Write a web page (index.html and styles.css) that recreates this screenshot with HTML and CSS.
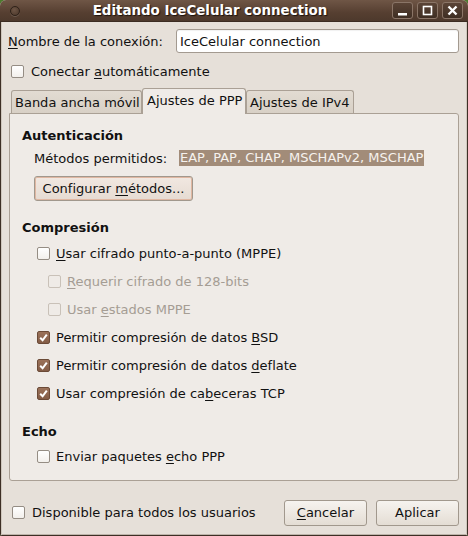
FILE: index.html
```html
<!DOCTYPE html>
<html lang="es">
<head>
<meta charset="utf-8">
<title>Editando IceCelular connection</title>
<link rel="stylesheet" href="styles.css">
</head>
<body>
<div class="window">
  <div class="titlebar">
    <span class="menu-dot"></span>
    <span class="title">Editando IceCelular connection</span>
    <div class="wbtns">
      <span class="wbtn"><svg width="11" height="11" viewBox="0 0 11 11"><rect x="1" y="8" width="9" height="2.5" fill="#fff"/></svg></span>
      <span class="wbtn"><svg width="11" height="11" viewBox="0 0 11 11"><rect x="1.5" y="1.5" width="8" height="8" fill="none" stroke="#fff" stroke-width="1.6"/></svg></span>
      <span class="wbtn"><svg width="11" height="11" viewBox="0 0 11 11"><path d="M1.5 1.5 L9.5 9.5 M9.5 1.5 L1.5 9.5" stroke="#fff" stroke-width="2.4"/></svg></span>
    </div>
  </div>
  <div class="content">
    <div class="name-row">
      <span class="name-label"><u>N</u>ombre de la conexión:</span>
      <div class="entry">IceCelular connection</div>
    </div>
    <div class="check top-check"><span class="box"></span><span>Conectar <u>a</u>utomáticamente</span></div>
    <div class="notebook">
      <div class="tabs">
        <div class="tab tab-1">Banda ancha móvil</div>
        <div class="tab tab-2 active">Ajustes de PPP</div>
        <div class="tab tab-3">Ajustes de IPv4</div>
      </div>
      <div class="panel">
        <div class="heading first">Autenticación</div>
        <div class="methods-row">
          <span class="methods-label">Métodos permitidos:</span>
          <span class="selected">EAP, PAP, CHAP, MSCHAPv2, MSCHAP</span>
        </div>
        <div class="btn config-btn"><span>Configurar <u>m</u>étodos...</span></div>
        <div class="heading comp">Compresión</div>
        <div class="check row"><span class="box"></span><span><u>U</u>sar cifrado punto-a-punto (MPPE)</span></div>
        <div class="check row sub disabled"><span class="box"></span><span><u>R</u>equerir cifrado de 128-bits</span></div>
        <div class="check row sub disabled"><span class="box"></span><span>Usar <u>e</u>stados MPPE</span></div>
        <div class="check row"><span class="box checked"><svg width="11" height="11" viewBox="0 0 11 11"><path d="M2.2 5.8 L4.6 8.3 L8.8 2.6" fill="none" stroke="#fff" stroke-width="2"/></svg></span><span>Permitir compresión de datos <u>B</u>SD</span></div>
        <div class="check row"><span class="box checked"><svg width="11" height="11" viewBox="0 0 11 11"><path d="M2.2 5.8 L4.6 8.3 L8.8 2.6" fill="none" stroke="#fff" stroke-width="2"/></svg></span><span>Permitir compresión de datos <u>d</u>eflate</span></div>
        <div class="check row"><span class="box checked"><svg width="11" height="11" viewBox="0 0 11 11"><path d="M2.2 5.8 L4.6 8.3 L8.8 2.6" fill="none" stroke="#fff" stroke-width="2"/></svg></span><span>Usar compresión de ca<u>b</u>eceras TCP</span></div>
        <div class="heading echo">Echo</div>
        <div class="check row"><span class="box"></span><span>Enviar paquetes <u>e</u>cho PPP</span></div>
      </div>
    </div>
    <div class="bottom">
      <div class="check bottom-check"><span class="box"></span><span>Disponible para todos los usuarios</span></div>
      <div class="btn action"><span><u>C</u>ancelar</span></div>
      <div class="btn action"><span>Aplicar</span></div>
    </div>
  </div>
</div>
</body>
</html>
```
FILE: styles.css
```css
html, body {
  margin: 0;
  padding: 0;
  background: #4d7a2e;
}
body {
  font-family: "DejaVu Sans", "Liberation Sans", sans-serif;
  font-size: 13px;
  color: #111;
}
u { text-decoration: underline; text-underline-offset: 2px; }

.window {
  width: 468px;
  height: 536px;
  display: flex;
  flex-direction: column;
  border-radius: 6px 6px 2px 2px;
  overflow: hidden;
  background: #e6e0d9;
}

.titlebar {
  height: 22px;
  flex: 0 0 22px;
  display: flex;
  align-items: center;
  padding: 0 5px 0 10px;
  background: linear-gradient(#6f5646, #563f31 60%, #4d392c);
  border-bottom: 1px solid #3c2c22;
  box-sizing: border-box;
}
.menu-dot {
  width: 8px;
  height: 8px;
  border-radius: 50%;
  border: 1px solid #2f2219;
  background: radial-gradient(circle at 40% 35%, #6d5545, #4a3629);
  box-shadow: 0 1px 0 rgba(255,255,255,0.15);
}
.title {
  flex: 1;
  text-align: center;
  color: #fff;
  font-weight: bold;
  font-size: 13.4px;
  padding-left: 8px;
  text-shadow: 1px 1px 1px #1c120c;
}
.wbtns { display: flex; gap: 4px; }
.wbtn {
  width: 21px;
  height: 17px;
  box-sizing: border-box;
  border: 1px solid #8a7567;
  border-radius: 3px;
  background: linear-gradient(#5a4436, #3f2e23);
  display: flex;
  align-items: center;
  justify-content: center;
}

.content {
  flex: 1;
  display: flex;
  flex-direction: column;
  border: 1px solid #3d2f25;
  border-top: 0;
  box-shadow: inset 1px 0 0 #cfc7bd, inset -1px 0 0 #cfc7bd, inset 0 -1px 0 #bdb4aa;
}

.name-row {
  display: flex;
  align-items: center;
  margin-top: 7px;
  padding: 0 8px 0 7px;
}
.name-label { flex: 0 0 168px; }
.entry {
  flex: 1;
  height: 24px;
  box-sizing: border-box;
  border: 1px solid #a39a90;
  border-radius: 3px;
  background: #fff;
  padding-left: 3px;
  display: flex;
  align-items: center;
  box-shadow: inset 0 1px 1px rgba(0,0,0,0.06);
}

.check {
  display: flex;
  align-items: center;
  gap: 7px;
}
.box {
  width: 13px;
  height: 13px;
  box-sizing: border-box;
  border: 1px solid #958d84;
  border-radius: 2px;
  background: linear-gradient(#ffffff, #f3f0ec);
  display: flex;
  align-items: center;
  justify-content: center;
  flex: 0 0 13px;
}
.box.checked {
  border-color: #6b4a37;
  background: linear-gradient(#9b725a, #835c46);
}
.disabled { color: #a59d94; }
.disabled .box {
  border-color: #c9c1b8;
  background: #efebe7;
}

.top-check {
  height: 20px;
  margin-top: 8px;
  padding-left: 10px;
}

.notebook {
  margin: 7px 8px 0 8px;
  flex: 1;
  display: flex;
  flex-direction: column;
}
.tabs {
  display: flex;
  align-items: flex-end;
  height: 25px;
  padding-left: 2px;
}
.tab {
  box-sizing: border-box;
  border: 1px solid #aaa095;
  border-bottom: 0;
  border-radius: 3px 3px 0 0;
  padding-left: 3px;
  display: flex;
  align-items: center;
  white-space: nowrap;
}
.tab-1, .tab-3 {
  height: 23px;
  background: linear-gradient(#e2dbd2, #d8d0c6);
  padding-top: 1px;
}
.tab-1 { width: 131px; }
.tab-3 { width: 108px; }
.tab-2 {
  width: 104px;
  height: 26px;
  margin-bottom: -1px;
  background: #efebe7;
  position: relative;
  z-index: 1;
  padding-bottom: 3px;
  padding-left: 4px;
}

.panel {
  flex: 1;
  background: #efebe7;
  border: 1px solid #aaa095;
  border-radius: 0 3px 3px 3px;
  display: flex;
  flex-direction: column;
  align-items: flex-start;
}
.heading {
  font-weight: bold;
  height: 20px;
  line-height: 20px;
  padding-left: 12px;
}
.heading.first { margin-top: 12px; }
.heading.comp { margin-top: 17px; }
.heading.echo { margin-top: 15px; }

.methods-row {
  display: flex;
  align-items: center;
  height: 20px;
  margin-top: 2px;
  padding-left: 24px;
}
.methods-label { width: 145px; }
.selected {
  background: #a28c79;
  color: #f6f2ee;
  height: 16px;
  line-height: 16px;
  padding: 0 1px;
}

.btn {
  box-sizing: border-box;
  border: 1px solid #a1988d;
  border-radius: 3px;
  background: linear-gradient(#f6f3ef, #e4ddd4);
  display: flex;
  align-items: center;
  justify-content: center;
}
.config-btn {
  margin: 8px 0 0 24px;
  width: 159px;
  height: 25px;
  background: linear-gradient(#f1e8e1, #e6dbd2);
  box-shadow: inset 0 0 0 1px #e0b7a2;
}

.check.row {
  height: 28px;
  padding-left: 27px;
  gap: 6px;
}
.check.row.sub { padding-left: 38px; }
.heading.comp + .check.row { margin-top: 1px; }

.bottom {
  flex: 0 0 54px;
  box-sizing: border-box;
  display: flex;
  align-items: center;
  padding: 18px 8px 9px 11px;
}
.bottom-check { flex: 1; gap: 7px; }
.action {
  width: 83px;
  height: 26px;
  margin-left: 9px;
}
```
